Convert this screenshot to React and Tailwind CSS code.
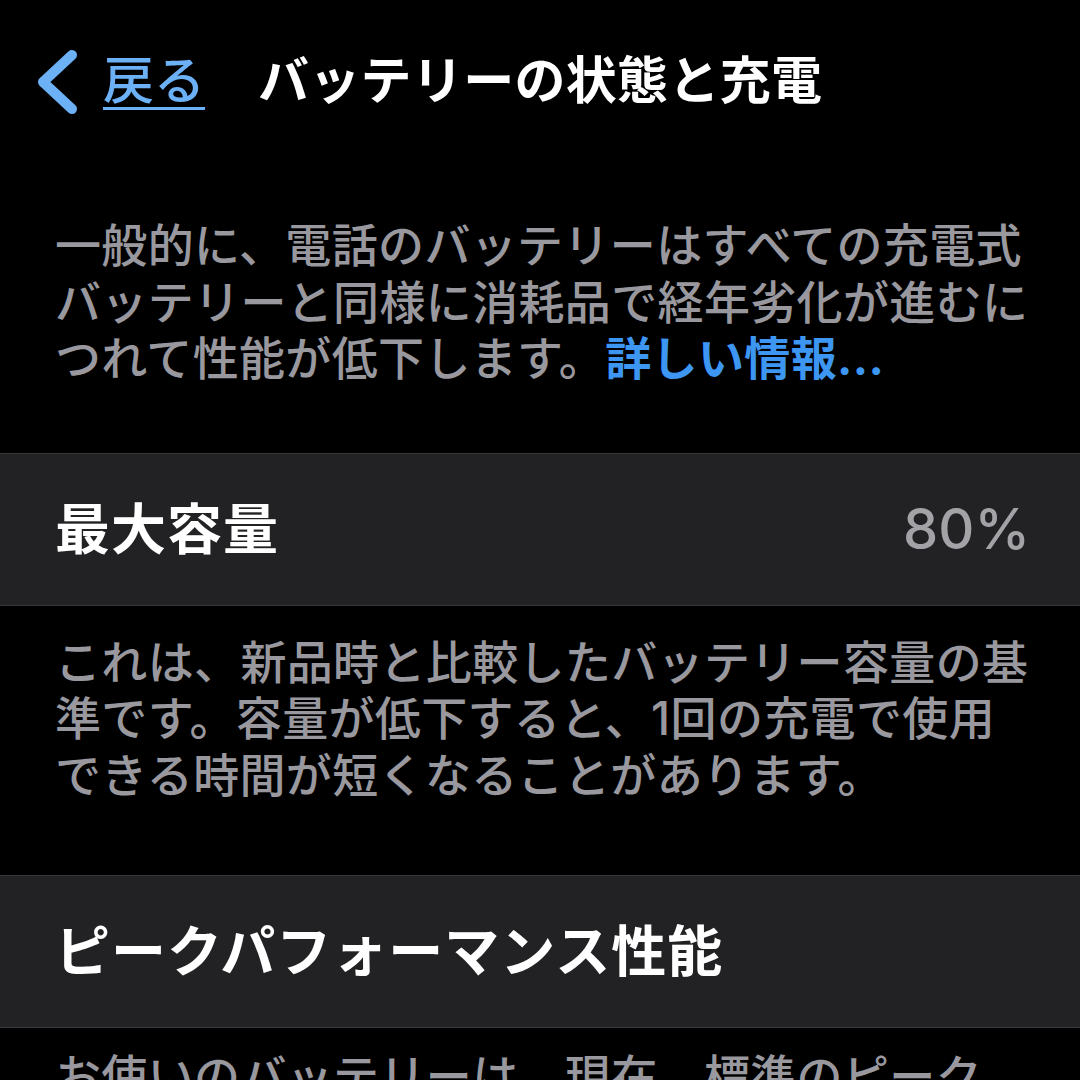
const font = { fontFamily: 'Inter, "Noto Sans CJK JP", sans-serif' };

const Para = ({ lines, className = "" }) => (
  <div className={`px-[55px] text-[46px] font-medium leading-[56.5px] text-[#98989e] tracking-[0.35px] ${className}`}>
    {lines.map((l, i) => (
      <div key={i} className="whitespace-nowrap">
        {l}
      </div>
    ))}
  </div>
);

const Row = ({ title, value }) => (
  <div className="h-[153px] bg-[#222224] border-y border-[#38383a] flex items-center justify-between pl-[55px] pr-[50px]">
    <span className="text-[55px] font-bold text-white tracking-[1px]">{title}</span>
    {value && <span className="text-[56px] font-medium text-[#a2a2a7]">{value}</span>}
  </div>
);

export default function App() {
  return (
    <div className="w-[1080px] h-[1080px] bg-black overflow-hidden" style={font}>
      {/* Header */}
      <div className="h-[165px] flex items-center pl-[35px] pb-[3px]">
        <svg width="46" height="66" viewBox="0 0 46 66" className="mt-[2px]">
          <path d="M37 6 L8 33 L37 60" fill="none" stroke="#6cb0f6" strokeWidth="10" strokeLinecap="round" strokeLinejoin="round" />
        </svg>
        <span className="ml-[22px] text-[51px] font-medium text-[#6cb0f6] underline decoration-[3px] underline-offset-[8px]">
          戻る
        </span>
        <span className="ml-[53px] text-[51px] font-bold text-white tracking-[0.3px]">
          バッテリーの状態と充電
        </span>
      </div>

      <Para
        className="mt-[52px]"
        lines={[
          "一般的に、電話のバッテリーはすべての充電式",
          "バッテリーと同様に消耗品で経年劣化が進むに",
          <>
            つれて性能が低下します。<span className="text-[#3d97f2] font-bold">詳しい情報...</span>
          </>,
        ]}
      />

      <div className="mt-[66px]">
        <Row title="最大容量" value="80%" />
      </div>

      <Para
        className="mt-[28px]"
        lines={[
          "これは、新品時と比較したバッテリー容量の基",
          "準です。容量が低下すると、1回の充電で使用",
          "できる時間が短くなることがあります。",
        ]}
      />

      <div className="mt-[72px]">
        <Row title="ピークパフォーマンス性能" />
      </div>

      <Para
        className="mt-[20px]"
        lines={["お使いのバッテリーは、現在、標準のピーク", "パフォーマンスに対応しています。"]}
      />
    </div>
  );
}
